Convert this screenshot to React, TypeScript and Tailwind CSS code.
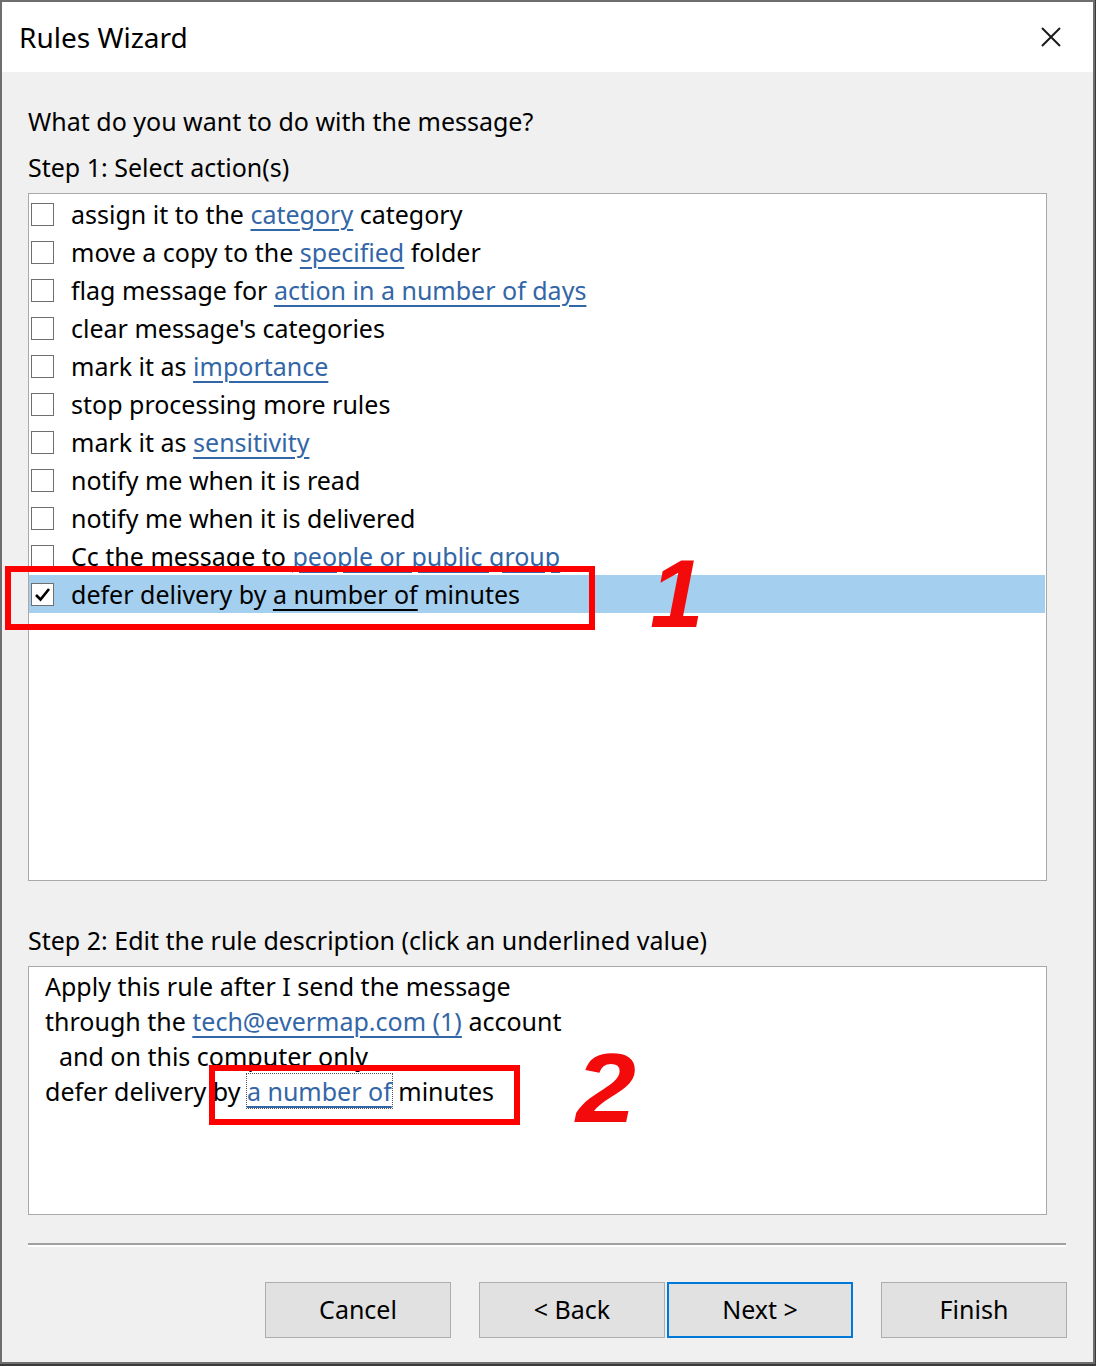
import React from 'react'

const font = { fontFamily: '"Noto Sans", "Open Sans", "Liberation Sans", sans-serif' }

type Part = { text: string; link?: boolean }

const actions: Part[][] = [
  [{ text: 'assign it to the ' }, { text: 'category', link: true }, { text: ' category' }],
  [{ text: 'move a copy to the ' }, { text: 'specified', link: true }, { text: ' folder' }],
  [{ text: 'flag message for ' }, { text: 'action in a number of days', link: true }],
  [{ text: "clear message's categories" }],
  [{ text: 'mark it as ' }, { text: 'importance', link: true }],
  [{ text: 'stop processing more rules' }],
  [{ text: 'mark it as ' }, { text: 'sensitivity', link: true }],
  [{ text: 'notify me when it is read' }],
  [{ text: 'notify me when it is delivered' }],
  [{ text: 'Cc the message to ' }, { text: 'people or public group', link: true }],
  [{ text: 'defer delivery by ' }, { text: 'a number of', link: true }, { text: ' minutes' }],
]

function Checkbox({ checked }: { checked?: boolean }) {
  return (
    <div className="w-[23px] h-[23px] border border-[#6f6f6f] bg-white flex items-center justify-center shrink-0">
      {checked && (
        <svg width="17" height="15" viewBox="0 0 17 15">
          <path d="M2 8 L6.5 12.5 L15 2" fill="none" stroke="#000" strokeWidth="2.6" />
        </svg>
      )}
    </div>
  )
}

function ActionRow({ parts, index }: { parts: Part[]; index: number }) {
  const selected = index === actions.length - 1
  return (
    <div className={`h-[38px] flex items-center pl-[2px] ${selected ? 'bg-[#a5cfef]' : ''}`}>
      <Checkbox checked={selected} />
      <span className="ml-[17px] text-[25px] leading-none text-black whitespace-pre">
        {parts.map((p, i) =>
          p.link ? (
            <span
              key={i}
              className={`underline underline-offset-[5px] decoration-[1.5px] ${selected ? 'text-black' : 'text-[#3366a6]'}`}
            >
              {p.text}
            </span>
          ) : (
            <span key={i}>{p.text}</span>
          )
        )}
      </span>
    </div>
  )
}

function Button({ label, focused }: { label: string; focused?: boolean }) {
  return (
    <button
      className={`w-[186px] h-[56px] bg-[#e1e1e1] text-[25px] text-black ${
        focused ? 'border-2 border-[#0078d7]' : 'border border-[#adadad]'
      }`}
    >
      {label}
    </button>
  )
}

export default function App() {
  return (
    <div className="w-[1096px] h-[1366px] bg-[#3a3a3a] relative overflow-hidden" style={font}>
      <div className="w-[1095px] h-[1364px] border-2 border-[#6e6e6e] bg-[#f0f0f0] flex flex-col">
        {/* title bar */}
        <div className="h-[70px] bg-white flex items-center justify-between pl-[17px] pr-[32px] shrink-0">
          <span className="text-[28px] text-black">Rules Wizard</span>
          <svg width="20" height="20" viewBox="0 0 20 20">
            <path d="M1 1 L19 19 M19 1 L1 19" stroke="#1a1a1a" strokeWidth="2" />
          </svg>
        </div>

        <div className="flex flex-col pl-[26px] pr-[27px]">
          <div className="mt-[32px] text-[25px] leading-[34px] text-black">What do you want to do with the message?</div>
          <div className="mt-[12px] text-[25px] leading-[34px] text-black">Step 1: Select action(s)</div>

          <div className="mt-[9px] w-[1019px] h-[688px] border border-[#a9a9a9] bg-white pt-px pr-px">
            {actions.map((parts, i) => (
              <ActionRow key={i} parts={parts} index={i} />
            ))}
          </div>

          <div className="mt-[42px] text-[25px] leading-[34px] text-black">
            Step 2: Edit the rule description (click an underlined value)
          </div>

          <div className="mt-[9px] w-[1019px] h-[249px] border border-[#a9a9a9] bg-white pl-[16px] pt-[2px] text-[25px] leading-[35px] text-black">
            <div>Apply this rule after I send the message</div>
            <div>
              through the{' '}
              <span className="text-[#3366a6] underline underline-offset-[5px] decoration-[1.5px]">tech@evermap.com (1)</span>{' '}
              account
            </div>
            <div className="pl-[14px]">and on this computer only</div>
            <div>
              defer delivery by{' '}
              <span className="text-[#3366a6] underline underline-offset-[5px] decoration-[1.5px] outline outline-1 outline-dotted outline-[#555]">
                a number of
              </span>{' '}
              minutes
            </div>
          </div>

          {/* etched separator */}
          <div className="mt-[28px] w-[1038px] border-t-2 border-[#a0a0a0] border-b-2 border-b-white" />

          <div className="mt-[35px] flex justify-end w-[1039px]">
            <Button label="Cancel" />
            <div className="w-[28px]" />
            <Button label="< Back" />
            <div className="w-[2px]" />
            <Button label="Next >" focused />
            <div className="w-[28px]" />
            <Button label="Finish" />
          </div>
        </div>
      </div>

      {/* red callouts */}
      <div className="absolute left-[5px] top-[566px] w-[590px] h-[64px] border-[6px] border-[#f00]" />
      <div
        className="absolute left-[650px] top-[546px] text-[#f30b0b] text-[96px] font-black italic leading-none"
        style={{ fontFamily: '"Liberation Sans", Arial, sans-serif' }}
      >
        1
      </div>
      <div className="absolute left-[209px] top-[1065px] w-[311px] h-[60px] border-[6px] border-[#f00]" />
      <div
        className="absolute left-[576px] top-[1039px] text-[#f30b0b] text-[98px] font-black italic leading-none scale-x-110 origin-left"
        style={{ fontFamily: '"Liberation Sans", Arial, sans-serif' }}
      >
        2
      </div>
    </div>
  )
}
